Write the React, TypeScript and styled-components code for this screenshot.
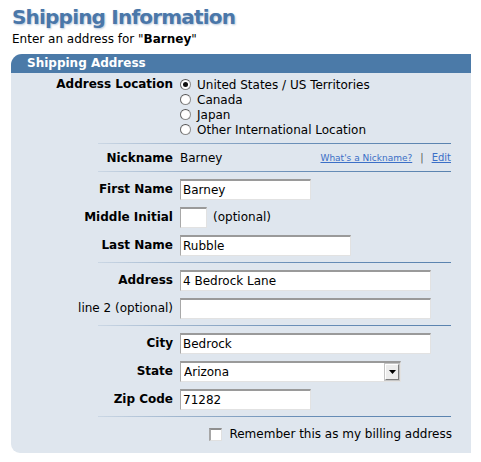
import React from 'react';
import styled, { createGlobalStyle } from 'styled-components';

const GlobalStyle = createGlobalStyle`
  body {
    margin: 0;
    background: #ffffff;
    font-family: "DejaVu Sans", Verdana, sans-serif;
    color: #000000;
  }
`;

const Page = styled.div`
  padding: 4px 0 0 11px;
  width: 460px;
`;

const Title = styled.h1`
  margin: 0 0 0 1px;
  font-size: 20px;
  line-height: 27px;
  font-weight: bold;
  color: #4a77a9;
  text-shadow: 1px 1px 2px #b9c8db;
  letter-spacing: -0.8px;
`;

const Subtitle = styled.div`
  margin: 0 0 0 1px;
  font-size: 12px;
  line-height: 17px;
  height: 23px;
`;

const Panel = styled.div`
  background: #dfe6ee;
  border-radius: 11px 0 0 9px;
  overflow: hidden;
  padding-bottom: 5px;
`;

const PanelHeader = styled.div`
  background: #4b7aa8;
  color: #ffffff;
  font-weight: bold;
  font-size: 12px;
  height: 19px;
  line-height: 19px;
  padding-left: 16px;
`;

const Row = styled.div<{ $h?: number }>`
  display: grid;
  grid-template-columns: 162px 1fr;
  column-gap: 7px;
  align-items: center;
  height: ${p => p.$h ?? 28}px;
`;

const Label = styled.div<{ $plain?: boolean }>`
  text-align: right;
  font-size: 12px;
  font-weight: ${p => (p.$plain ? 'normal' : 'bold')};
  white-space: nowrap;
`;

const Value = styled.div`
  display: flex;
  align-items: center;
  font-size: 12px;
`;

const RadioGroup = styled.div`
  display: grid;
  grid-template-columns: 162px 1fr;
  column-gap: 7px;
  padding: 4px 0 3px;
`;

const RadioList = styled.div`
  display: flex;
  flex-direction: column;
`;

const RadioLine = styled.label`
  display: flex;
  align-items: center;
  gap: 6px;
  height: 15px;
  font-size: 12px;
`;

const Radio = styled.input.attrs({ type: 'radio' })`
  appearance: none;
  margin: 0;
  width: 11px;
  height: 11px;
  border-radius: 50%;
  background: radial-gradient(circle at 50% 60%, #ffffff 55%, #e6e6e6 100%);
  border: 1px solid #8c8c8c;
  border-top-color: #555;
  border-left-color: #666;
  display: grid;
  place-items: center;
  &:checked::after {
    content: '';
    width: 5px;
    height: 5px;
    border-radius: 50%;
    background: #111;
  }
`;

const Divider = styled.div`
  height: 1px;
  margin: 3px 20px 3px 87px;
  background: linear-gradient(to right, #cbd7e4 0%, #9cb3cc 25%, #6a8fb8 55%, #5a83af 100%);
`;

const TextInput = styled.input<{ $w: number }>`
  box-sizing: border-box;
  width: ${p => p.$w}px;
  height: 21px;
  margin: 0;
  padding: 1px 2px 0;
  font-family: "DejaVu Sans", Verdana, sans-serif;
  font-size: 12px;
  color: #000;
  background: #ffffff;
  border: 1px solid #e2e2e2;
  border-top: 2px solid #9a9a9a;
  border-left: 1px solid #a8a8a8;
  outline: none;
`;

const Hint = styled.span`
  margin-left: 6px;
  font-size: 12px;
`;

const NickLinks = styled.div`
  display: flex;
  align-items: center;
  justify-content: space-between;
  padding-right: 20px;
  font-size: 12px;
`;

const LinkGroup = styled.div`
  display: flex;
  align-items: center;
  gap: 8px;
`;

const SmallLink = styled.a<{ $size?: number }>`
  color: #3b6fc7;
  text-decoration: underline;
  font-size: ${p => p.$size ?? 9}px;
  cursor: pointer;
`;

const Pipe = styled.span`
  color: #555;
  font-size: 10px;
`;

const SelectBox = styled.div`
  display: flex;
  box-sizing: border-box;
  width: 221px;
  height: 21px;
  background: #ffffff;
  border: 1px solid #e2e2e2;
  border-top: 2px solid #9a9a9a;
  border-left: 1px solid #a8a8a8;
  padding-right: 1px;
  align-items: center;
`;

const Select = styled.select`
  appearance: none;
  flex: 1;
  border: none;
  background: transparent;
  font-family: "DejaVu Sans", Verdana, sans-serif;
  font-size: 12px;
  padding: 0 0 0 3px;
  outline: none;
  color: #000;
`;

const ArrowBox = styled.div`
  width: 14px;
  height: 16px;
  box-sizing: border-box;
  border: 1px solid #ffffff;
  border-right-color: #7d7d7d;
  border-bottom-color: #7d7d7d;
  outline: 1px solid #c4c4c4;
  display: grid;
  place-items: center;
  background: #ededed;
  svg { display: block; }
`;

const CheckRow = styled.label`
  display: flex;
  align-items: center;
  justify-content: flex-end;
  gap: 7px;
  height: 28px;
  padding-right: 19px;
  font-size: 12px;
`;

const Check = styled.input.attrs({ type: 'checkbox' })`
  appearance: none;
  margin: 0;
  width: 13px;
  height: 13px;
  background: #ffffff;
  border: 1px solid #e0e0e0;
  border-top: 2px solid #8f8f8f;
  border-left: 2px solid #a6a6a6;
  box-sizing: border-box;
`;

const locations = [
  'United States / US Territories',
  'Canada',
  'Japan',
  'Other International Location',
];

export default function App() {
  return (
    <Page>
      <GlobalStyle />
      <Title>Shipping Information</Title>
      <Subtitle>
        Enter an address for "<b>Barney</b>"
      </Subtitle>
      <Panel>
        <PanelHeader>Shipping Address</PanelHeader>
        <RadioGroup>
          <Label style={{ lineHeight: '15px' }}>Address Location</Label>
          <RadioList>
            {locations.map((loc, i) => (
              <RadioLine key={loc}>
                <Radio name="loc" defaultChecked={i === 0} />
                {loc}
              </RadioLine>
            ))}
          </RadioList>
        </RadioGroup>
        <Divider />
        <Row $h={21}>
          <Label>Nickname</Label>
          <NickLinks>
            <span>Barney</span>
            <LinkGroup>
              <SmallLink>What's a Nickname?</SmallLink>
              <Pipe>|</Pipe>
              <SmallLink $size={10}>Edit</SmallLink>
            </LinkGroup>
          </NickLinks>
        </Row>
        <Divider />
        <Row>
          <Label>First Name</Label>
          <Value><TextInput $w={131} defaultValue="Barney" /></Value>
        </Row>
        <Row>
          <Label>Middle Initial</Label>
          <Value>
            <TextInput $w={27} />
            <Hint>(optional)</Hint>
          </Value>
        </Row>
        <Row>
          <Label>Last Name</Label>
          <Value><TextInput $w={171} defaultValue="Rubble" /></Value>
        </Row>
        <Divider />
        <Row>
          <Label>Address</Label>
          <Value><TextInput $w={251} defaultValue="4 Bedrock Lane" /></Value>
        </Row>
        <Row>
          <Label $plain>line 2 (optional)</Label>
          <Value><TextInput $w={251} /></Value>
        </Row>
        <Divider />
        <Row>
          <Label>City</Label>
          <Value><TextInput $w={251} defaultValue="Bedrock" /></Value>
        </Row>
        <Row>
          <Label>State</Label>
          <Value>
            <SelectBox>
              <Select defaultValue="AZ">
                <option value="AL">Alabama</option>
                <option value="AK">Alaska</option>
                <option value="AZ">Arizona</option>
                <option value="AR">Arkansas</option>
              </Select>
              <ArrowBox>
                <svg width="7" height="4" viewBox="0 0 7 4">
                  <path d="M0 0 H7 L3.5 4 Z" fill="#000" />
                </svg>
              </ArrowBox>
            </SelectBox>
          </Value>
        </Row>
        <Row>
          <Label>Zip Code</Label>
          <Value><TextInput $w={131} defaultValue="71282" /></Value>
        </Row>
        <Divider />
        <CheckRow>
          <Check />
          Remember this as my billing address
        </CheckRow>
      </Panel>
    </Page>
  );
}
